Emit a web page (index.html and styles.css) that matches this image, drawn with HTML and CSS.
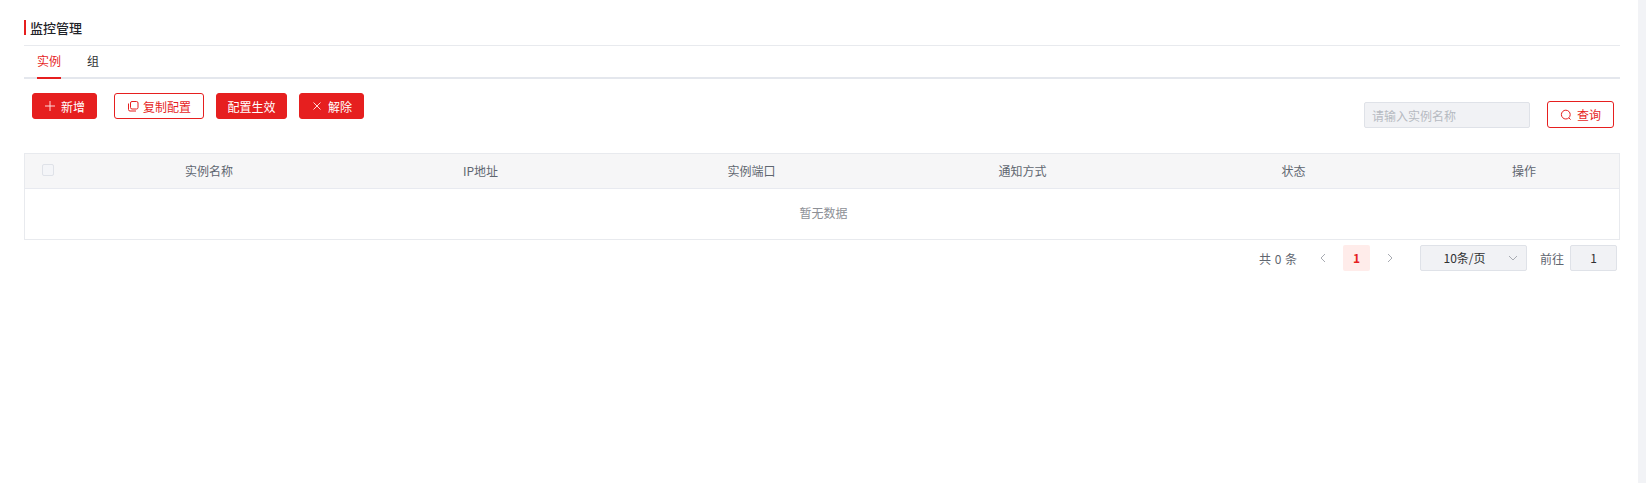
FILE: index.html
```html
<!DOCTYPE html>
<html lang="zh-CN">
<head>
<meta charset="utf-8">
<title>监控管理</title>
<link rel="stylesheet" href="styles.css">
</head>
<body>
<main class="page">
  <h1 class="title"><span class="title-text">监控管理</span></h1>
  <nav class="tabs">
    <a class="tab active">实例</a>
    <a class="tab">组</a>
  </nav>
  <section class="toolbar">
    <div class="actions">
      <button class="btn solid w65">
        <svg class="ico" viewBox="0 0 12 12"><path d="M6 1v10M1 6h10"/></svg>新增
      </button>
      <button class="btn outline w90 wide-gap">
        <svg class="ico" viewBox="0 0 12 12"><rect x="3.5" y="1.5" width="7.5" height="7.5" rx="1.5"/><path d="M1.5 3.5v6a1.5 1.5 0 0 0 1.5 1.5h6"/></svg>复制配置
      </button>
      <button class="btn solid w71">配置生效</button>
      <button class="btn solid w65">
        <svg class="ico" viewBox="0 0 12 12"><path d="M2.5 2.5l7 7M9.5 2.5l-7 7"/></svg>解除
      </button>
    </div>
    <div class="search">
      <input class="search-input" placeholder="请输入实例名称">
      <button class="btn outline query">
        <svg class="ico" viewBox="0 0 12 12"><circle cx="5.8" cy="5.6" r="4.4"/><path d="M9 9l1.6 1.6"/></svg>查询
      </button>
    </div>
  </section>
  <table class="grid">
    <colgroup>
      <col class="c-check"><col class="c-name"><col class="c-data"><col class="c-data"><col class="c-data"><col class="c-data"><col>
    </colgroup>
    <thead>
      <tr>
        <th class="check-cell"><span class="checkbox"></span></th>
        <th>实例名称</th>
        <th>IP地址</th>
        <th>实例端口</th>
        <th>通知方式</th>
        <th>状态</th>
        <th>操作</th>
      </tr>
    </thead>
    <tbody>
      <tr><td class="empty" colspan="7">暂无数据</td></tr>
    </tbody>
  </table>
  <footer class="pager">
    <span class="total">共 0 条</span>
    <svg class="arrow prev" viewBox="0 0 8 10"><path d="M6 1L2 5l4 4"/></svg>
    <span class="page-num">1</span>
    <svg class="arrow next" viewBox="0 0 8 10"><path d="M2 1l4 4-4 4"/></svg>
    <span class="size">10条/页
      <svg class="chev" viewBox="0 0 10 6"><path d="M1 1l4 4 4-4"/></svg>
    </span>
    <span class="goto">前往</span>
    <span class="jump">1</span>
  </footer>
</main>
<div class="scrollbar"></div>
</body>
</html>
```
FILE: styles.css
```css
* { box-sizing: border-box; }
html, body { height: 100%; }
body {
  margin: 0;
  display: flex;
  overflow: hidden;
  background: #fff;
  color: #5f6670;
  font-family: "Noto Sans CJK SC", "Noto Sans", sans-serif;
  font-size: 12px;
}
.page { flex: 1; min-width: 0; padding: 20px 18px 0 24px; }
.scrollbar { width: 8px; background: #f2f3f6; }

.title {
  margin: 0;
  height: 26px;
  font-size: 13px;
  font-weight: 500;
  line-height: 15px;
  color: #1f2329;
  border-bottom: 1px solid #e8eaee;
}
.title-text { display: block; border-left: 2px solid #e61f1f; padding-left: 4px; }

.tabs {
  display: flex;
  height: 33px;
  padding-left: 13px;
  border-bottom: 2px solid #e4e7ed;
}
.tab {
  height: 33px;
  line-height: 30px;
  margin-right: 26px;
  color: #303133;
}
.tab.active { color: #e61f1f; border-bottom: 2px solid #e61f1f; }

.toolbar { display: flex; justify-content: space-between; padding: 14px 6px 0 8px; height: 74px; }
.actions { display: flex; align-items: flex-start; }
.btn {
  display: inline-flex;
  align-items: center;
  justify-content: center;
  height: 26px;
  padding: 0;
  margin-right: 12px;
  border-radius: 3px;
  border: 1px solid #e61f1f;
  background: #e61f1f;
  color: #fff;
  font: inherit;
}
.btn.outline { background: #fff; color: #e61f1f; }
.w65 { width: 65px; }
.w71 { width: 71px; }
.w90 { width: 90px; }
.wide-gap { margin-left: 5px; }
.ico { width: 12px; height: 12px; margin-right: 5px; fill: none; stroke: currentColor; stroke-width: 1; }
.w90 .ico { margin-right: 4px; }
.solid .ico { stroke: #ffd9d9; }

.search { display: flex; align-items: flex-start; padding-top: 8px; }
.search-input {
  width: 166px;
  height: 26px;
  margin: 1px 17px 0 0;
  padding: 0 7px;
  background: #f1f2f5;
  border: 1px solid #dfe2e8;
  border-radius: 2px;
  font: inherit;
}
.search-input::placeholder { color: #b6bac1; }
.query { width: 67px; height: 27px; margin-right: 0; }

.grid {
  width: 100%;
  table-layout: fixed;
  border-collapse: separate;
  border-spacing: 0;
  border: 1px solid #e8eaee;
}
.c-check { width: 48px; }
.c-name { width: 272px; }
.c-data { width: 271px; }
.grid th {
  height: 35px;
  padding: 0 0 2px;
  background: #f6f6f7;
  border-bottom: 1px solid #e8eaf0;
  font-weight: 400;
  color: #5f6670;
}
.checkbox {
  display: block;
  width: 12px;
  height: 12px;
  margin-left: 17px;
  background: #f4f5f8;
  border: 1px solid #dfe2e8;
  border-radius: 2px;
}
.empty { height: 50px; padding: 0 0 4px 3px; text-align: center; color: #8d9096; }

.pager {
  display: flex;
  align-items: center;
  justify-content: flex-end;
  height: 26px;
  margin-top: 5px;
  padding-right: 3px;
}
.total { margin-right: 22px; word-spacing: 1px; color: #5f6670; }
.arrow { width: 8px; height: 10px; fill: none; stroke: #a8abb2; stroke-width: 1; }
.page-num {
  width: 27px;
  height: 26px;
  margin: 0 16px;
  line-height: 26px;
  text-align: center;
  background: #ffecea;
  color: #e61f1f;
  font-weight: 700;
  border-radius: 2px;
}
.size {
  position: relative;
  width: 107px;
  height: 26px;
  margin: 0 13px 0 26px;
  padding-right: 18px;
  line-height: 24px;
  text-align: center;
  color: #303133;
  background: #f1f2f5;
  border: 1px solid #dfe2e8;
  border-radius: 2px;
}
.chev { position: absolute; right: 8px; top: 9px; width: 10px; height: 6px; fill: none; stroke: #a8abb2; stroke-width: 1; }
.goto { margin-right: 6px; }
.jump {
  width: 47px;
  height: 26px;
  line-height: 24px;
  text-align: center;
  background: #f1f2f5;
  border: 1px solid #dfe2e8;
  border-radius: 2px;
  color: #303133;
}
```
